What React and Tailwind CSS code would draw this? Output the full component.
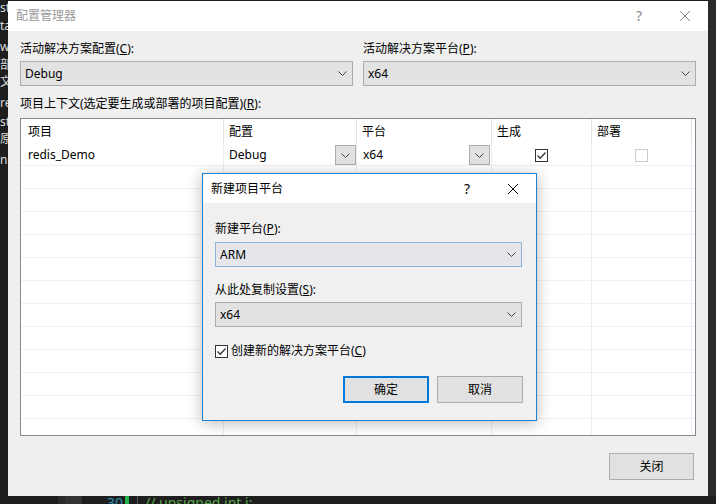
import React from "react";

const Chevron = ({ className = "" }) => (
  <svg width="9" height="5" viewBox="0 0 9 5" className={className}>
    <path d="M0.5 0.5 L4.5 4.5 L8.5 0.5" fill="none" stroke="#444" strokeWidth="1" />
  </svg>
);

const CloseX = ({ color = "#000" }) => (
  <svg width="10" height="10" viewBox="0 0 10 10">
    <path d="M0 0 L10 10 M10 0 L0 10" stroke={color} strokeWidth="1" />
  </svg>
);

const Check = () => (
  <svg width="11" height="11" viewBox="0 0 11 11">
    <path d="M1.5 5.5 L4.2 8.2 L9.5 2.5" fill="none" stroke="#333" strokeWidth="1.3" />
  </svg>
);

const Combo = ({ value, className = "" }) => (
  <div className={`flex items-center h-[25px] border border-[#adadad] bg-[#e2e2e2] pl-[4px] pr-[5px] ${className}`}>
    <span className="flex-1 leading-[16px]">{value}</span>
    <Chevron />
  </div>
);

const leftLines = [
  { t: "st", c: "mt-0" },
  { t: "ta", c: "mt-[2px]" },
  { t: "w", c: "mt-[5px]" },
  { t: "部", c: "mt-[2px]" },
  { t: "文", c: "mt-[1px]" },
  { t: "re", c: "mt-[5px]" },
  { t: "st", c: "mt-[3px]" },
  { t: "原", c: "mt-[1px]" },
  { t: "nd", c: "mt-[5px]" },
];

const colW = ["w-[203px]", "w-[133px]", "w-[135px]", "w-[100px]", "w-[100px]"];

export default function App() {
  const emptyRows = Array.from({ length: 11 });
  return (
    <div className="w-[716px] h-[504px] bg-[#1e1e1e] overflow-hidden flex flex-col relative font-['Noto_Sans','Noto_Sans_CJK_SC',sans-serif] text-[12px] text-black">
      <div className="flex h-[496px]">
        {/* left editor strip */}
        <div className="w-[8px] overflow-hidden flex flex-col text-[12px] text-[#dcdcdc] whitespace-nowrap">
          {leftLines.map((l, i) => (
            <div key={i} className={`h-[16px] leading-[16px] overflow-hidden ${l.c}`}>{l.t}</div>
          ))}
        </div>

        {/* main dialog */}
        <div className="w-[700px] mt-[1px] bg-[#efefef] flex flex-col">
          <div className="h-[30px] bg-white flex items-center">
            <span className="flex-1 pl-[8px] text-[#9a9a9a] leading-[16px]">配置管理器</span>
            <div className="w-[46px] flex justify-center text-[14px] text-[#8a8a8a] leading-[16px]">?</div>
            <div className="w-[46px] flex justify-center"><CloseX color="#8a8a8a" /></div>
          </div>
          <div className="flex flex-col px-[12px]">
            <div className="grid grid-cols-2 gap-x-[10px] pt-[10px]">
              <div className="flex flex-col">
                <div className="leading-[16px]">活动解决方案配置(<u>C</u>):</div>
                <Combo value="Debug" className="mt-[4px]" />
              </div>
              <div className="flex flex-col">
                <div className="leading-[16px]">活动解决方案平台(<u>P</u>):</div>
                <Combo value="x64" className="mt-[4px]" />
              </div>
            </div>
            <div className="leading-[16px] mt-[10px]">项目上下文(选定要生成或部署的项目配置)(<u>R</u>):</div>
            <div className="mt-[6px] h-[318px] border border-[#828790] bg-white flex flex-col">
              {/* header */}
              <div className="flex h-[24px] shrink-0">
                {["项目", "配置", "平台", "生成", "部署"].map((h, i) => (
                  <div key={i} className={`${colW[i]} border-r border-[#e3e3e3] flex items-center pt-[1px] ${i === 0 ? "pl-[7px]" : "pl-[5px]"} leading-[16px]`}>{h}</div>
                ))}
              </div>
              {/* row 1 */}
              <div className="flex h-[23px] shrink-0 border-b border-[#f0f0f0]">
                <div className={`${colW[0]} border-r border-[#e9eef6] flex items-center pt-[2px] pl-[7px]`}>redis_Demo</div>
                <div className={`${colW[1]} border-r border-[#e9eef6] flex pl-[5px]`}>
                  <span className="flex-1 self-center pt-[2px]">Debug</span>
                  <div className="w-[21px] h-[20px] mt-[2px] border border-[#adadad] bg-[#e1e1e1] flex items-center justify-center"><Chevron /></div>
                </div>
                <div className={`${colW[2]} border-r border-[#e9eef6] flex pl-[6px]`}>
                  <span className="flex-1 self-center pt-[2px]">x64</span>
                  <div className="w-[21px] h-[20px] mt-[2px] mr-[1px] border border-[#adadad] bg-[#e1e1e1] flex items-center justify-center"><Chevron /></div>
                </div>
                <div className={`${colW[3]} border-r border-[#e9eef6] flex items-center justify-center pt-[2px]`}>
                  <div className="w-[13px] h-[13px] border border-[#333] bg-white flex items-center justify-center"><Check /></div>
                </div>
                <div className={`${colW[4]} border-r border-[#e9eef6] flex items-center justify-center pt-[2px]`}>
                  <div className="w-[13px] h-[13px] border border-[#cccccc] bg-white"></div>
                </div>
              </div>
              {emptyRows.map((_, r) => (
                <div key={r} className="flex h-[23px] shrink-0 border-b border-[#f0f0f0]">
                  {colW.map((w, i) => (
                    <div key={i} className={`${w} border-r border-[#e9eef6]`}></div>
                  ))}
                </div>
              ))}
              <div className="flex flex-1">
                {colW.map((w, i) => (
                  <div key={i} className={`${w} border-r border-[#e9eef6]`}></div>
                ))}
              </div>
            </div>
            <div className="flex justify-end mt-[17px] pr-[2px]">
              <div className="w-[85px] h-[27px] border border-[#adadad] bg-[#e1e1e1] flex items-center justify-center leading-[16px]">关闭</div>
            </div>
          </div>
        </div>

        {/* right strip */}
        <div className="w-[8px] bg-[#2b2b2b]"></div>
      </div>

      {/* bottom editor strip */}
      <div className="h-[8px] flex overflow-hidden text-[14px] whitespace-nowrap">
        <div className="w-[57px]"></div>
        <div className="w-[8px] bg-[#2a2a2a] border-l border-[#171717]"></div>
        <div className="w-[17px] bg-[#333333]"></div>
        <div className="w-[25px]"></div>
        <div className="w-[15px] text-[#2b91af] leading-[16px] -mt-[1px]">30</div>
        <div className="w-[3px]"></div>
        <div className="w-[4px] bg-[#22b14c]"></div>
        <div className="w-[8px]"></div>
        <div className="w-[1px] bg-[#555]"></div>
        <div className="w-[7px]"></div>
        <div className="text-[#57a64a] leading-[16px] -mt-[1px]">// unsigned int i;</div>
      </div>

      {/* modal sub-dialog */}
      <div className="absolute left-[202px] top-[173px] w-[335px] h-[248px] border border-[#1883d7] bg-[#f0f0f0] shadow-[0_2px_14px_rgba(0,0,0,0.28)] flex flex-col">
        <div className="h-[29px] bg-white flex items-center">
          <span className="flex-1 pl-[8px] leading-[16px]">新建项目平台</span>
          <div className="w-[46px] flex justify-center text-[14px] leading-[16px]">?</div>
          <div className="w-[46px] flex justify-center"><CloseX /></div>
        </div>
        <div className="flex flex-col pl-[12px] pr-[14px]">
          <div className="leading-[16px] mt-[18px]">新建平台(<u>P</u>):</div>
          <div className="mt-[5px] flex items-center h-[25px] border border-[#8fb3d9] bg-[#e4e6ea] pl-[4px] pr-[5px]">
            <span className="flex-1 leading-[16px]">ARM</span>
            <Chevron />
          </div>
          <div className="leading-[16px] mt-[15px]">从此处复制设置(<u>S</u>):</div>
          <Combo value="x64" className="mt-[4px]" />
          <div className="flex items-center mt-[16px] h-[16px]">
            <div className="w-[13px] h-[13px] border border-[#333] bg-white flex items-center justify-center"><Check /></div>
            <span className="ml-[3px] leading-[16px]">创建新的解决方案平台(<u>C</u>)</span>
          </div>
          <div className="flex justify-end gap-[8px] mt-[17px] -mr-[1px]">
            <div className="w-[86px] h-[27px] border-2 border-[#0078d7] bg-[#e1e1e1] flex items-center justify-center leading-[16px]">确定</div>
            <div className="w-[86px] h-[27px] border border-[#adadad] bg-[#e1e1e1] flex items-center justify-center leading-[16px]">取消</div>
          </div>
        </div>
      </div>
    </div>
  );
}
